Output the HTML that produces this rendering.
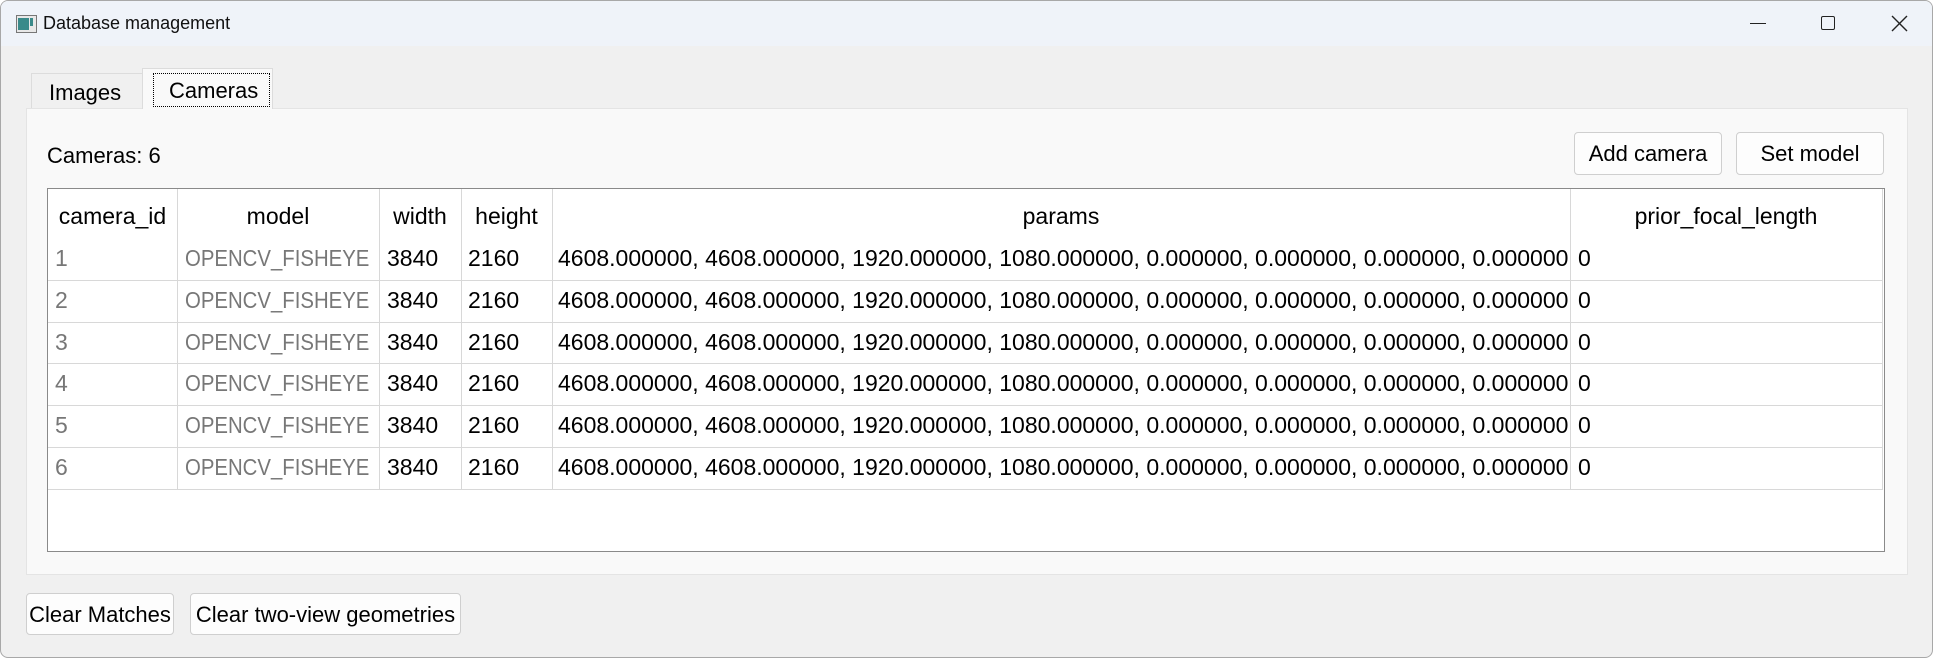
<!DOCTYPE html>
<html><head><meta charset="utf-8"><style>
*{margin:0;padding:0;box-sizing:border-box}
body{width:1933px;height:658px;background:#fff;font-family:"Liberation Sans",sans-serif;position:relative;overflow:hidden}
.win{position:absolute;left:0;top:0;width:1933px;height:658px;background:#f0f0f0;border:1px solid #a8a8a8;border-radius:8px;overflow:hidden}
.tb{position:absolute;left:0;top:0;width:100%;height:45px;background:#eff3f9}
.title{position:absolute;left:42px;top:12px;font-size:18px;color:#111}
.ab{position:absolute;font-size:22px;color:#000;white-space:nowrap}
.tab{position:absolute;background:#f0f0f0;border:1px solid #dcdcdc;border-bottom:none}
.panel{position:absolute;left:25px;top:107px;width:1882px;height:467px;background:#f9f9f9;border:1px solid #e4e4e4}
.btn{position:absolute;background:#fdfdfd;border:1px solid #cfcfcf;border-radius:4px;font-size:22px;text-align:center;line-height:41px;color:#000;white-space:nowrap}
.table{position:absolute;left:46px;top:187px;width:1838px;height:364px;background:#fff;border:1px solid #8a8a8a}
.c{position:absolute;font-size:23px;white-space:nowrap;line-height:42px}
.vl{position:absolute;width:1px;background:#d8d8d8;top:0;height:301px}
.hl{position:absolute;height:1px;background:#d8d8d8;left:0;width:1835px}
.g{color:#777}
.m{transform:scaleX(0.885);transform-origin:0 0}
</style></head><body><div class="win">
<div class="tb"></div>
<svg style="position:absolute;left:15px;top:14px" width="21" height="18"><rect x="0.5" y="0.5" width="20" height="17" fill="#e8e8e8" stroke="#777"/><rect x="2" y="3" width="11" height="12" fill="#3a8a8a"/><rect x="14" y="3" width="3" height="8" fill="#3a8a8a"/></svg>
<div class="title">Database management</div>
<div style="position:absolute;left:1749px;top:22px;width:16px;height:1px;background:#222"></div>
<div style="position:absolute;left:1820px;top:15px;width:14px;height:14px;border:1.5px solid #222;border-radius:2px"></div>
<svg style="position:absolute;left:1890px;top:14px" width="17" height="17"><path d="M1 1L16 16M16 1L1 16" stroke="#222" stroke-width="1.4"/></svg>

<div class="tab" style="left:30px;top:72px;width:112px;height:36px"></div>
<div class="ab" style="left:48px;top:79px">Images</div>
<div class="tab" style="left:141px;top:67px;width:131px;height:41px;background:#f9f9f9;z-index:2"></div>
<div style="position:absolute;left:152px;top:72px;width:117px;height:34px;border:1.5px dotted #000;z-index:3"></div>
<div class="ab" style="left:168px;top:77px;z-index:3">Cameras</div>

<div class="panel"></div>
<div class="ab" style="left:46px;top:142px">Cameras: 6</div>
<div class="btn" style="left:1573px;top:131px;width:148px;height:43px">Add camera</div>
<div class="btn" style="left:1735px;top:131px;width:148px;height:43px">Set model</div>

<div class="table">
<div class="vl" style="left:129px"></div>
<div class="vl" style="left:331px"></div>
<div class="vl" style="left:413px"></div>
<div class="vl" style="left:504px"></div>
<div class="vl" style="left:1522px"></div>
<div class="vl" style="left:1834px"></div>
<div class="hl" style="top:91px"></div><div class="hl" style="top:133px"></div><div class="hl" style="top:174px"></div><div class="hl" style="top:216px"></div><div class="hl" style="top:258px"></div><div class="hl" style="top:300px"></div>
<div class="c" style="left:0;width:129px;text-align:center;top:6px">camera_id</div>
<div class="c" style="left:129px;width:202px;text-align:center;top:6px">model</div>
<div class="c" style="left:331px;width:82px;text-align:center;top:6px">width</div>
<div class="c" style="left:413px;width:91px;text-align:center;top:6px">height</div>
<div class="c" style="left:504px;width:1018px;text-align:center;top:6px">params</div>
<div class="c" style="left:1522px;width:312px;text-align:center;top:6px">prior_focal_length</div>
</div>
<div id="rows"></div>
<div class="btn" style="left:25px;top:592px;width:148px;height:42px">Clear Matches</div>
<div class="btn" style="left:189px;top:592px;width:271px;height:42px">Clear two-view geometries</div>
</div>
<script>
var p="4608.000000, 4608.000000, 1920.000000, 1080.000000, 0.000000, 0.000000, 0.000000, 0.000000",h="";
for(var i=0;i<6;i++){var t=236+i*41.8;
h+='<div class="c g" style="left:54px;top:'+t+'px">'+(i+1)+'</div>'+
'<div class="c g m" style="left:184px;top:'+t+'px">OPENCV_FISHEYE</div>'+
'<div class="c" style="left:386px;top:'+t+'px">3840</div>'+
'<div class="c" style="left:467px;top:'+t+'px">2160</div>'+
'<div class="c" style="left:557px;top:'+t+'px">'+p+'</div>'+
'<div class="c" style="left:1577px;top:'+t+'px">0</div>';}
document.getElementById('rows').innerHTML=h;
</script>
</body></html>
